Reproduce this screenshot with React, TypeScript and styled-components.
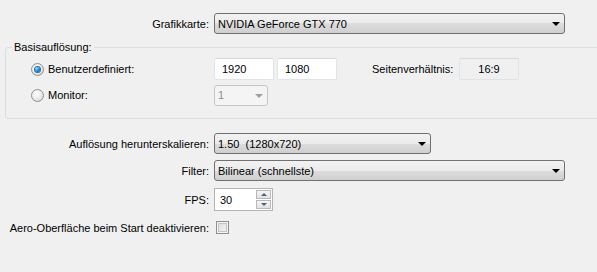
import React from 'react';
import styled, { createGlobalStyle } from 'styled-components';

const GlobalStyle = createGlobalStyle`
  html, body {
    margin: 0;
    padding: 0;
    background: #f0f0f0;
    overflow: hidden;
  }
  body {
    font-family: 'Liberation Sans', Arial, sans-serif;
    font-size: 11px;
    color: #000;
  }
`;

const Page = styled.div`
  width: 597px;
  height: 272px;
  padding-top: 13px;
  box-sizing: border-box;
`;

const Row = styled.div<{ $mt?: number }>`
  display: grid;
  grid-template-columns: 209px auto;
  column-gap: 5px;
  align-items: center;
  margin-top: ${({ $mt }) => $mt ?? 0}px;
`;

const Label = styled.span`
  text-align: right;
  white-space: nowrap;
`;

const Combo = styled.div<{ $w: number; $disabled?: boolean }>`
  width: ${({ $w }) => $w}px;
  height: 21px;
  box-sizing: border-box;
  display: flex;
  align-items: center;
  justify-content: space-between;
  padding: 0 4px 0 3px;
  border: 1px solid ${({ $disabled }) => ($disabled ? '#c6c6c6' : '#707070')};
  border-radius: 3px;
  background: ${({ $disabled }) =>
    $disabled
      ? '#f4f4f4'
      : 'linear-gradient(#f2f2f2 0%, #ebebeb 50%, #dddddd 50%, #cfcfcf 100%)'};
  color: ${({ $disabled }) => ($disabled ? '#8d8d8d' : '#000')};
  white-space: pre;
`;

const Arrow = styled.span<{ $disabled?: boolean }>`
  width: 0;
  height: 0;
  border-left: 4px solid transparent;
  border-right: 4px solid transparent;
  border-top: 4px solid ${({ $disabled }) => ($disabled ? '#a0a0a0' : '#000')};
  margin-top: 1px;
`;

const GroupBox = styled.fieldset`
  margin: 7px -20px 0 5px;
  padding: 0;
  height: 78px;
  box-sizing: border-box;
  border: 1px solid #d5dfe5;
  border-radius: 3px;
`;

const Legend = styled.legend`
  margin-left: 6px;
  padding: 0 2px;
  line-height: 13px;
`;

const GroupRow = styled.div<{ $mt?: number }>`
  display: flex;
  align-items: center;
  height: 22px;
  margin-top: ${({ $mt }) => $mt ?? 0}px;
`;

const RadioLabel = styled.label`
  display: flex;
  align-items: center;
  gap: 4px;
  width: 183px;
  padding-left: 25px;
`;

const Radio = styled.span<{ $checked?: boolean }>`
  width: 11px;
  height: 11px;
  border-radius: 50%;
  border: 1px solid #8e8f8f;
  background: radial-gradient(circle at 40% 35%, #ffffff 0%, #e6e6e6 60%, #c8c8c8 100%);
  display: flex;
  align-items: center;
  justify-content: center;
  &::after {
    content: '';
    display: ${({ $checked }) => ($checked ? 'block' : 'none')};
    width: 5px;
    height: 5px;
    border-radius: 50%;
    background: radial-gradient(circle at 35% 30%, #8ee0ff 0%, #1b7fcf 55%, #0a3a6a 100%);
    box-shadow: 0 0 0 1px #2d6fa8;
  }
`;

const TextBox = styled.div<{ $w: number; $ml?: number; $readOnly?: boolean; $center?: boolean }>`
  width: ${({ $w }) => $w}px;
  height: 22px;
  box-sizing: border-box;
  margin-left: ${({ $ml }) => $ml ?? 0}px;
  border: 1px solid #e0e3e8;
  border-top-color: #d6d9de;
  border-radius: 2px;
  background: ${({ $readOnly }) => ($readOnly ? '#f0f0f0' : '#fff')};
  display: flex;
  align-items: center;
  justify-content: ${({ $center }) => ($center ? 'center' : 'flex-start')};
  padding-left: ${({ $center }) => ($center ? 0 : 7)}px;
`;

const SideLabel = styled.span`
  margin-left: 35px;
  width: 87px;
`;

const Spin = styled.div`
  width: 59px;
  height: 23px;
  box-sizing: border-box;
  border: 1px solid #b4b4b4;
  background: #fff;
  display: flex;
  align-items: center;
  justify-content: space-between;
  padding: 1px 1px 1px 5px;
`;

const SpinButtons = styled.div`
  display: flex;
  flex-direction: column;
  gap: 1px;
  align-self: stretch;
`;

const SpinButton = styled.span<{ $up?: boolean }>`
  width: 15px;
  flex: 1;
  box-sizing: border-box;
  border: 1px solid #b8b8b8;
  background: linear-gradient(#f5f5f5, #e2e2e2);
  display: flex;
  align-items: center;
  justify-content: center;
  &::after {
    content: '';
    width: 0;
    height: 0;
    border-left: 3px solid transparent;
    border-right: 3px solid transparent;
    ${({ $up }) =>
      $up ? 'border-bottom: 3px solid #4d6185;' : 'border-top: 3px solid #4d6185;'}
  }
`;

const CheckBox = styled.span`
  width: 13px;
  height: 13px;
  box-sizing: border-box;
  margin-left: 2px;
  border: 1px solid #8e8f8f;
  background: linear-gradient(135deg, #dcdcdc, #f6f6f6);
  box-shadow: inset 0 0 0 1px #f4f4f4, inset 0 0 0 2px #c4c4c4;
`;

const App = () => {
  return (
    <Page>
      <GlobalStyle />
      <Row>
        <Label>Grafikkarte:</Label>
        <Combo $w={351}>
          <span>NVIDIA GeForce GTX 770</span>
          <Arrow />
        </Combo>
      </Row>

      <GroupBox>
        <Legend>Basisauflösung:</Legend>
        <GroupRow $mt={4}>
          <RadioLabel>
            <Radio $checked />
            Benutzerdefiniert:
          </RadioLabel>
          <TextBox $w={60}>1920</TextBox>
          <TextBox $w={60} $ml={3}>1080</TextBox>
          <SideLabel>Seitenverhältnis:</SideLabel>
          <TextBox $w={60} $readOnly $center>16:9</TextBox>
        </GroupRow>
        <GroupRow $mt={4}>
          <RadioLabel>
            <Radio />
            Monitor:
          </RadioLabel>
          <Combo $w={54} $disabled>
            <span>1</span>
            <Arrow $disabled />
          </Combo>
        </GroupRow>
      </GroupBox>

      <Row $mt={14}>
        <Label>Auflösung herunterskalieren:</Label>
        <Combo $w={217}>
          <span>1.50  (1280x720)</span>
          <Arrow />
        </Combo>
      </Row>
      <Row $mt={6}>
        <Label>Filter:</Label>
        <Combo $w={351}>
          <span>Bilinear (schnellste)</span>
          <Arrow />
        </Combo>
      </Row>
      <Row $mt={7}>
        <Label>FPS:</Label>
        <Spin>
          <span>30</span>
          <SpinButtons>
            <SpinButton $up />
            <SpinButton />
          </SpinButtons>
        </Spin>
      </Row>
      <Row $mt={10}>
        <Label>Aero-Oberfläche beim Start deaktivieren:</Label>
        <CheckBox />
      </Row>
    </Page>
  );
};

export default App;
